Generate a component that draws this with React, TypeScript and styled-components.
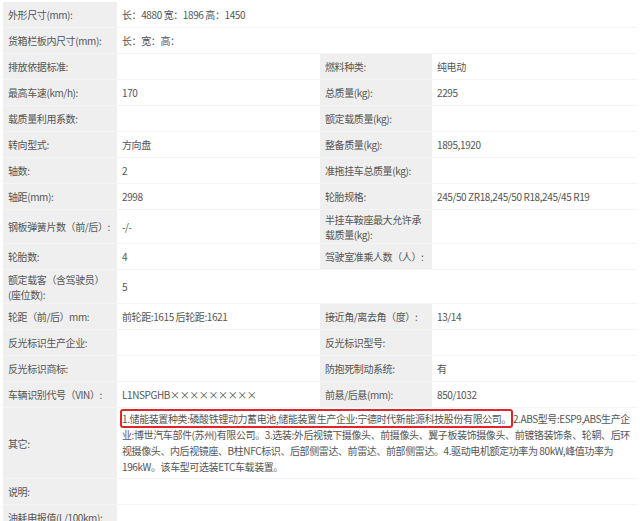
import React from "react";
import styled, { createGlobalStyle } from "styled-components";

const G = createGlobalStyle`
  body { margin: 0; background: #fff; font-family: "Noto Sans CJK SC", "Liberation Sans", sans-serif; }
`;
const Wrap = styled.div`
  padding: 2px 3px 0 3px;
`;
const Table = styled.div`
  display: grid;
  grid-template-columns: 114px 203px 112px 1fr;
  row-gap: 1px;
  background: #f4f4f4;
  font-size: 10px;
  letter-spacing: -0.4px;
  color: #555;
  line-height: 15px;
`;
const Cell = styled.div<{ $label?: boolean; $span?: number; $h?: number }>`
  background: ${(p) => (p.$label ? "#efefef" : "#fff")};
  grid-column: span ${(p) => p.$span || 1};
  height: ${(p) => p.$h || 25}px;
  display: flex;
  align-items: center;
  padding: 0 5px;
  box-sizing: border-box;
  overflow: hidden;
`;
const Note = styled.div`
  line-height: 16px;
`;
const Mark = styled.span`
  outline: 2px solid #e0262b;
  border-radius: 1px;
`;

type R = [string, string, string?, string?, number?];
const rows: R[] = [
  ["外形尺寸(mm):", "长：4880 宽：1896 高：1450"],
  ["货箱栏板内尺寸(mm):", "长：宽：高："],
  ["排放依据标准:", "", "燃料种类:", "纯电动"],
  ["最高车速(km/h):", "170", "总质量(kg):", "2295"],
  ["载质量利用系数:", "", "额定载质量(kg):", ""],
  ["转向型式:", "方向盘", "整备质量(kg):", "1895,1920"],
  ["轴数:", "2", "准拖挂车总质量(kg):", ""],
  ["轴距(mm):", "2998", "轮胎规格:", "245/50 ZR18,245/50 R18,245/45 R19"],
  ["钢板弹簧片数（前/后）:", "-/-", "半挂车鞍座最大允许承载质量(kg):", "", 33],
  ["轮胎数:", "4", "驾驶室准乘人数（人）:", ""],
  ["额定载客（含驾驶员）(座位数):", "5", undefined, undefined, 33],
  ["轮距（前/后）mm:", "前轮距:1615 后轮距:1621", "接近角/离去角（度）:", "13/14"],
  ["反光标识生产企业:", "", "反光标识型号:", ""],
  ["反光标识商标:", "", "防抱死制动系统:", "有"],
  ["车辆识别代号（VIN）:", "L1NSPGHB×××××××××", "前悬/后悬(mm):", "850/1032"],
];

export default function App() {
  return (
    <Wrap>
      <G />
      <Table>
        {rows.map((r, i) =>
          r[2] === undefined ? (
            <React.Fragment key={i}>
              <Cell $label $h={r[4]}>{r[0]}</Cell>
              <Cell $span={3} $h={r[4]}>{r[1]}</Cell>
            </React.Fragment>
          ) : (
            <React.Fragment key={i}>
              <Cell $label $h={r[4]}>{r[0]}</Cell>
              <Cell $h={r[4]}>{r[1]}</Cell>
              <Cell $label $h={r[4]}>{r[2]}</Cell>
              <Cell $h={r[4]}>{r[3]}</Cell>
            </React.Fragment>
          )
        )}
        <Cell $label $h={70}>其它:</Cell>
        <Cell $span={3} $h={70}>
          <Note>
            <Mark>1.储能装置种类:磷酸铁锂动力蓄电池,储能装置生产企业:宁德时代新能源科技股份有限公司。</Mark>{" "}
            2.ABS型号:ESP9,ABS生产企业:博世汽车部件(苏州)有限公司。3.选装:外后视镜下摄像头、前摄像头、翼子板装饰摄像头、前镀铬装饰条、轮辋、后环视摄像头、内后视镜座、B柱NFC标识、后部侧雷达、前雷达、前部侧雷达。4.驱动电机额定功率为 80kW,峰值功率为196kW。该车型可选装ETC车载装置。
          </Note>
        </Cell>
        <Cell $label>说明:</Cell>
        <Cell $span={3}></Cell>
        <Cell $label>油耗申报值(L/100km):</Cell>
        <Cell $span={3}></Cell>
      </Table>
    </Wrap>
  );
}
